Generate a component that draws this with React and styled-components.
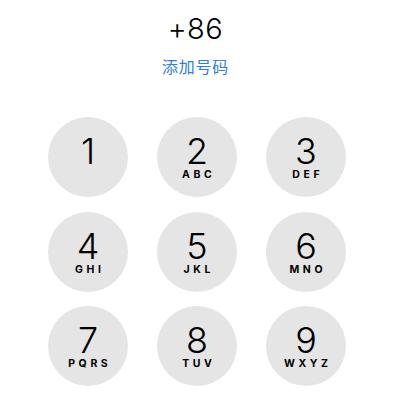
import React from 'react';
import styled, { createGlobalStyle } from 'styled-components';

const GlobalStyle = createGlobalStyle`
  html, body {
    margin: 0;
    padding: 0;
    background: #fff;
    overflow: hidden;
    height: 400px;
  }
  body {
    font-family: Inter, "Liberation Sans", "Noto Sans CJK SC", sans-serif;
    color: #000;
  }
`;

const keys = [
  { d: '1', l: '' },
  { d: '2', l: 'ABC' },
  { d: '3', l: 'DEF' },
  { d: '4', l: 'GHI' },
  { d: '5', l: 'JKL' },
  { d: '6', l: 'MNO' },
  { d: '7', l: 'PQRS' },
  { d: '8', l: 'TUV' },
  { d: '9', l: 'WXYZ' },
];

function App() {
  return (
    <Screen>
      <GlobalStyle />
      <Header>
        <Number>+86</Number>
        <AddLink>添加号码</AddLink>
      </Header>
      <Pad>
        {keys.map((k) => (
          <Key key={k.d}>
            <Digit>{k.d}</Digit>
            {k.l && <Letters>{k.l}</Letters>}
          </Key>
        ))}
        {/* bottom row only peeks in at the very edge */}
        <Key />
        <Key />
        <Key />
      </Pad>
    </Screen>
  );
}
export default App;

const Screen = styled.div`
  width: 400px;
  height: 400px;
  box-sizing: border-box;
  padding: 14px 54px 0 48px;
  display: flex;
  flex-direction: column;
  align-items: center;
`;

const Header = styled.div`
  display: flex;
  flex-direction: column;
  align-items: center;
  margin-right: 3px;
`;

const Number = styled.div`
  font-size: 29px;
  line-height: 29px;
  font-weight: 300;
  letter-spacing: 0.5px;
`;

const AddLink = styled.div`
  margin-top: 15px;
  font-family: "Noto Sans CJK SC", sans-serif;
  font-size: 16px;
  line-height: 16px;
  color: #2f80d6;
  letter-spacing: 0.8px;
`;

const Pad = styled.div`
  margin-top: 43px;
  display: grid;
  grid-template-columns: repeat(3, 80px);
  column-gap: 29px;
  row-gap: 14.5px;
`;

const Key = styled.div`
  width: 80px;
  height: 80px;
  border-radius: 50%;
  background: #e5e5e5;
  display: flex;
  flex-direction: column;
  align-items: center;
  box-sizing: border-box;
  padding-top: 17px;
`;

const Digit = styled.div`
  font-size: 36px;
  line-height: 34px;
  font-weight: 300;
`;

const Letters = styled.div`
  margin-top: 1px;
  font-size: 10.5px;
  line-height: 12px;
  font-weight: 700;
  letter-spacing: 3.6px;
  padding-left: 3.6px;
`;
